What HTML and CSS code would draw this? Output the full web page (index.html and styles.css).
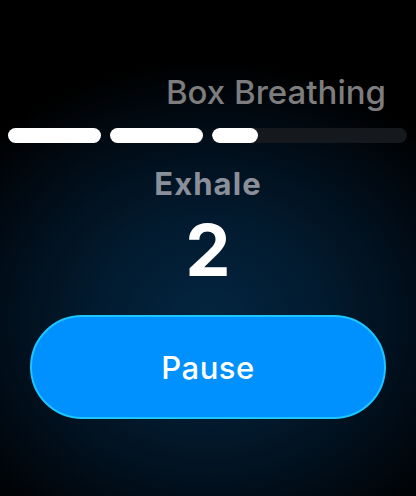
FILE: index.html
```html
<!DOCTYPE html>
<html>
<head>
<meta charset="utf-8">
<link rel="stylesheet" href="styles.css">
</head>
<body>
<main class="screen">
  <h1 class="title">Box Breathing</h1>
  <div class="progress">
    <div class="seg seg-full"></div>
    <div class="seg seg-full"></div>
    <div class="seg seg-track"><div class="seg-fill" style="width: 23.5%"></div></div>
  </div>
  <div class="phase">Exhale</div>
  <div class="count">2</div>
  <button class="pause">Pause</button>
</main>
</body>
</html>
```
FILE: styles.css
```css
* { box-sizing: border-box; }
html, body {
  margin: 0;
  padding: 0;
  width: 416px;
  height: 496px;
  overflow: hidden;
}
body {
  background: radial-gradient(ellipse 300px 260px at 208px 320px, #032540 0%, #021a2e 40%, #010b15 75%, #000000 100%);
  font-family: Inter, "Noto Sans", sans-serif;
  color: #fff;
}
.screen {
  display: flex;
  flex-direction: column;
  align-items: stretch;
  padding: 72px 8px 0 8px;
}
.title {
  margin: 0;
  font-size: 33px;
  font-weight: 500;
  line-height: 40px;
  color: #7d7d7d;
  text-align: right;
  padding-right: 22px;
  letter-spacing: 0;
}
.progress {
  display: flex;
  gap: 9px;
  margin-top: 16px;
  margin-right: 1px;
  height: 15px;
}
.seg {
  height: 15px;
  border-radius: 8px;
}
.seg-full {
  flex: 0 0 93px;
  background: #ffffff;
}
.seg-track {
  flex: 1 1 auto;
  background: #15191e;
  overflow: hidden;
}
.seg-fill {
  height: 100%;
  background: #ffffff;
  border-radius: 8px;
}
.phase {
  margin-top: 22px;
  text-align: center;
  font-size: 31px;
  font-weight: 700;
  line-height: 38px;
  color: #8a909a;
  letter-spacing: 1.1px;
}
.count {
  margin-top: 11px;
  text-align: center;
  font-size: 72px;
  font-weight: 700;
  line-height: 72px;
  color: #ffffff;
}
.pause {
  align-self: center;
  margin-top: 29px;
  width: 356px;
  height: 104px;
  border-radius: 52px;
  border: 2px solid #1cc6ff;
  background: #0091ff;
  color: #ffffff;
  font-family: Inter, "Noto Sans", sans-serif;
  font-size: 31px;
  font-weight: 500;
  letter-spacing: 0.5px;
  padding: 0;
}
```
